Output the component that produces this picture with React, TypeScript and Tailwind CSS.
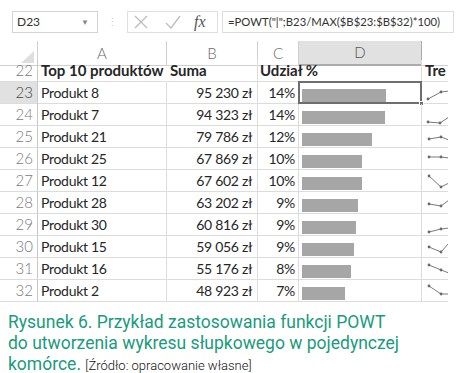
import React from 'react';

// Wiersze arkusza: produkt, suma, udział, punkty linii trendu
interface Row {
  n: number;
  name: string;
  sum: string;
  value: number;
  pct: string;
  trend: [number, number][];
}

const rows: Row[] = [
  { n: 23, name: 'Produkt 8', sum: '95 230 zł', value: 95230, pct: '14%', trend: [[6, 17], [19, 10], [27, 9]] },
  { n: 24, name: 'Produkt 7', sum: '94 323 zł', value: 94323, pct: '14%', trend: [[6, 18], [18, 19], [27, 13]] },
  { n: 25, name: 'Produkt 21', sum: '79 786 zł', value: 79786, pct: '12%', trend: [[7, 13], [19, 11], [27, 14]] },
  { n: 26, name: 'Produkt 25', sum: '67 869 zł', value: 67869, pct: '10%', trend: [[7, 9], [19, 9], [27, 10]] },
  { n: 27, name: 'Produkt 12', sum: '67 602 zł', value: 67602, pct: '10%', trend: [[7, 6], [19, 17], [27, 13]] },
  { n: 28, name: 'Produkt 28', sum: '63 202 zł', value: 63202, pct: '9%', trend: [[7, 12], [19, 14], [27, 8]] },
  { n: 29, name: 'Produkt 30', sum: '60 816 zł', value: 60816, pct: '9%', trend: [[7, 18], [19, 15], [27, 14]] },
  { n: 30, name: 'Produkt 15', sum: '59 056 zł', value: 59056, pct: '9%', trend: [[7, 11], [19, 16], [27, 7]] },
  { n: 31, name: 'Produkt 16', sum: '55 176 zł', value: 55176, pct: '8%', trend: [[7, 7], [19, 12], [27, 15]] },
  { n: 32, name: 'Produkt 2', sum: '48 923 zł', value: 48923, pct: '7%', trend: [[7, 6], [19, 14], [27, 14]] },
];

const MAX = 95230;
const cols = 'grid grid-cols-[38px_129px_91px_41px_123px_1fr]';
const cell = 'h-[22px] border-b border-r border-[#dcdcdc] flex items-center';

function Sparkline({ pts }: { pts: [number, number][] }) {
  return (
    <svg width="28" height="22" className="block">
      <polyline
        points={pts.map((p) => p.join(',')).join(' ')}
        fill="none"
        stroke="#7a7a7a"
        strokeWidth="1"
      />
      {pts.slice(0, 2).map((p, i) => (
        <circle key={i} cx={p[0]} cy={p[1]} r="1.4" fill="#6a6a6a" />
      ))}
    </svg>
  );
}

export default function App() {
  return (
    <div className="w-[460px] h-[373px] bg-white overflow-hidden font-['Lato','Liberation_Sans',sans-serif] text-[#262626]">
      {/* pasek formuły */}
      <div className="flex items-center h-[22px] mt-[11px]">
        <div className="ml-[12px] w-[86px] h-[22px] border border-[#d4d4d4] flex items-center justify-between px-[4px] text-[12px] text-[#333]">
          <span>D23</span>
          <span className="text-[8px] text-[#888] mr-[4px]">▼</span>
        </div>
        <span className="ml-[9px] text-[11px] text-[#c8c8c8]">⋮</span>
        <div className="ml-[9px] w-[91px] h-[22px] border border-[#e0e0e0] flex items-center">
          <svg width="16" height="16" viewBox="0 0 16 16" className="ml-[5px]">
            <path d="M2 2 L14 14 M14 2 L2 14" stroke="#bdbdbd" strokeWidth="1.3" fill="none" />
          </svg>
          <svg width="16" height="16" viewBox="0 0 16 16" className="ml-[16px]">
            <path d="M1 9 L6 14 L15 2" stroke="#bdbdbd" strokeWidth="1.3" fill="none" />
          </svg>
          <span className="ml-[13px] font-['Liberation_Serif',serif] italic text-[16px] text-[#555] leading-none">
            fx
          </span>
        </div>
        <div className="ml-[4px] w-[232px] h-[22px] border border-[#dcdcdc] flex items-center pl-[5px] text-[11.3px] text-[#333] whitespace-nowrap">
          =POWT("|";B23/MAX($B$23:$B$32)*100)
        </div>
      </div>

      {/* arkusz */}
      <div className="mt-[8px] w-[448px] overflow-hidden">
        {/* nagłówki kolumn */}
        <div className={`${cols} h-[19px] text-[15px] text-[#6b6b6b] font-light`}>
          <div className="border-r border-b border-[#d0d0d0] flex items-end justify-end pr-[3px] pb-[2px]">
            <svg width="13" height="12" viewBox="0 0 13 12">
              <polygon points="13,0 13,12 0,12" fill="#dedede" />
            </svg>
          </div>
          <div className="border-r border-b border-[#d0d0d0] flex items-center justify-center">A</div>
          <div className="border-r border-b border-[#d0d0d0] flex items-center justify-center">B</div>
          <div className="border-r border-b border-[#d0d0d0] flex items-center justify-center">C</div>
          <div className="bg-[#e1e1e1] border-r border-b-2 border-[#ababab] flex items-center justify-center text-[#555]">D</div>
          <div className="border-b border-[#d0d0d0]"></div>
        </div>

        {/* wiersz 22 */}
        <div className={`${cols} text-[15px] font-bold`}>
          <div className={`${cell} justify-end pr-[4px] font-light text-[#777] border-r-[#c8c8c8]`}>22</div>
          <div className={`${cell} pl-[3px] border-r-transparent whitespace-nowrap`}>Top 10 produktów</div>
          <div className={`${cell} pl-[3px]`}>Suma</div>
          <div className={`${cell} pl-[2px] border-r-transparent whitespace-nowrap`}>Udział %</div>
          <div className={cell}></div>
          <div className={`${cell} pl-[3px] border-r-0`}>Tre</div>
        </div>

        {rows.map((r) => (
          <div key={r.n} className={`${cols} text-[14px] tracking-[-0.3px]`}>
            <div
              className={`${cell} justify-end pr-[4px] font-light text-[15px] tracking-normal border-r-[#c8c8c8] ${
                r.n === 23 ? 'bg-[#e1e1e1] text-[#444]' : 'text-[#7a7a7a]'
              }`}
            >
              {r.n}
            </div>
            <div className={`${cell} pl-[3px]`}>{r.name}</div>
            <div className={`${cell} justify-end pr-[5px]`}>{r.sum}</div>
            <div className={`${cell} justify-end pr-[3px]`}>{r.pct}</div>
            <div className={`${cell} relative items-start`}>
              <div
                className="mt-[7px] ml-[3px] h-[13px] bg-[#a6a6a6]"
                style={{ width: Math.round((r.value / MAX) * 84) }}
              />
              {r.n === 23 && (
                <div className="absolute -left-[1px] -top-[1px] -right-[1px] -bottom-[1px] border-2 border-[#6e6e6e]">
                  <div className="absolute -right-[4px] -bottom-[4px] w-[5px] h-[5px] bg-[#6e6e6e] border border-white" />
                </div>
              )}
            </div>
            <div className={`${cell} border-r-0`}>
              <Sparkline pts={r.trend} />
            </div>
          </div>
        ))}
      </div>

      {/* podpis */}
      <div className="mt-[10px] ml-[8px] font-['Roboto',sans-serif] text-[17.5px] leading-[21px] text-[#199b7c]">
        Rysunek 6. Przykład zastosowania funkcji POWT
        <br />
        do utworzenia wykresu słupkowego w pojedynczej
        <br />
        komórce.{' '}
        <span className="text-[13px] font-light text-[#111]">[Źródło: opracowanie własne]</span>
      </div>
    </div>
  );
}
